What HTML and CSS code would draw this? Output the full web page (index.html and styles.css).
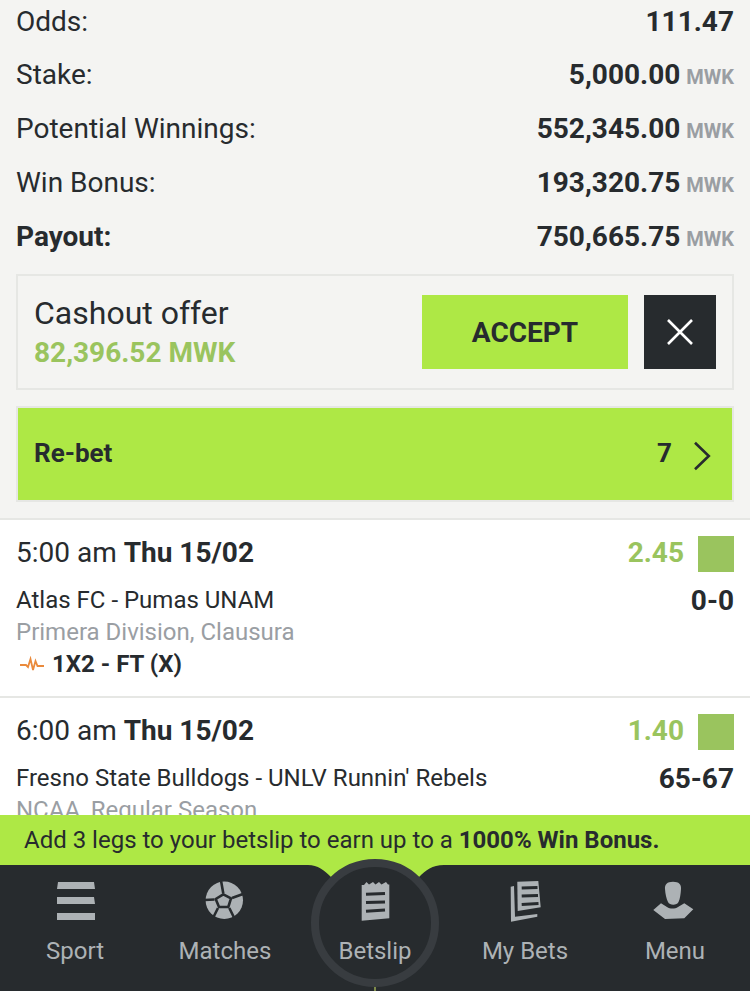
FILE: index.html
```html
<!DOCTYPE html>
<html lang="en">
<head>
  <meta charset="UTF-8" />
  <meta name="viewport" content="width=device-width, initial-scale=1.0" />
  <title>Betslip</title>
  <link rel="stylesheet" href="styles.css">
</head>
<body>
  <main class="content">
    <section class="summary">
      <div class="row"><span>Odds:</span><span class="value">111.47</span></div>
      <div class="row"><span>Stake:</span><span class="value">5,000.00<small>MWK</small></span></div>
      <div class="row"><span>Potential Winnings:</span><span class="value">552,345.00<small>MWK</small></span></div>
      <div class="row"><span>Win Bonus:</span><span class="value">193,320.75<small>MWK</small></span></div>
      <div class="row"><b>Payout:</b><span class="value">750,665.75<small>MWK</small></span></div>

      <div class="cashout">
        <div class="cashout-text">
          <div class="cashout-title">Cashout offer</div>
          <div class="cashout-amount">82,396.52 MWK</div>
        </div>
        <button class="accept">ACCEPT</button>
        <button class="decline" aria-label="Decline">
          <svg width="28" height="28" viewBox="0 0 28 28"><path d="M2 2 L26 26 M26 2 L2 26" stroke="#fff" stroke-width="2.6" fill="none"/></svg>
        </button>
      </div>

      <div class="rebet">
        <b>Re-bet</b>
        <span class="rebet-count">7</span>
        <svg width="18" height="28" viewBox="0 0 18 28"><path d="M3 0.700 L16.800 14 L3 27.300" stroke="#272b2e" stroke-width="2.600" fill="none"/></svg>
      </div>
    </section>

    <section class="bet">
      <div class="bet-top">
        <div class="bet-time">5:00 am <b>Thu 15/02</b></div>
        <div class="bet-odds">2.45</div>
        <div class="bet-square"></div>
      </div>
      <div class="bet-match"><span>Atlas FC - Pumas UNAM</span><b>0-0</b></div>
      <div class="bet-league">Primera Division, Clausura</div>
      <div class="bet-market">
        <svg width="26" height="16" viewBox="0 0 26 16"><path d="M1 9 H7 L9 11 L11.500 3 L14 14 L16.500 5 L18.500 10 H25" stroke="#ea8a3c" stroke-width="1.800" fill="none"/></svg>
        <span>1X2 - FT (X)</span>
      </div>
    </section>

    <section class="bet">
      <div class="bet-top">
        <div class="bet-time">6:00 am <b>Thu 15/02</b></div>
        <div class="bet-odds">1.40</div>
        <div class="bet-square"></div>
      </div>
      <div class="bet-match"><span>Fresno State Bulldogs - UNLV Runnin' Rebels</span><b>65-67</b></div>
      <div class="bet-league">NCAA, Regular Season</div>
    </section>
  </main>

  <div class="promo">Add 3 legs to your betslip to earn up to a <b>1000% Win Bonus.</b></div>

  <nav class="tabs">
    <svg class="notch" width="150" height="12" viewBox="0 0 150 12"><path d="M8 0 C18 0 24 5 31 12 H119 C126 5 132 0 144 0 Z" fill="#aee845"/></svg>
    <div class="ring"></div>
    <div class="ring-tick"></div>

    <div class="tab">
      <svg width="40" height="40" viewBox="0 0 40 40"><path d="M3 1 H39 L40 8 H2 Z M2 16 H39 L40 23 H2 Z M2 32 H40 V39 H2 Z" fill="#adb2b5"/></svg>
      <span>Sport</span>
    </div>
    <div class="tab">
      <svg width="40" height="40" viewBox="0 0 40 40">
        <circle cx="19.300" cy="19.300" r="18.700" fill="#adb2b5"/>
        <path d="M18.300 13.300 L26 17.300 L23.300 26 H14 L10.700 18 Z" fill="#adb2b5" stroke="#272b2e" stroke-width="2.600" stroke-linejoin="round"/>
        <path d="M18.300 12.500 L16 -0.500 M27 17 L38 13 M24.300 27 L30 38.500 M13 27 L7.500 38 M9.500 18.500 L-0.500 19" stroke="#272b2e" stroke-width="2.600" fill="none"/>
      </svg>
      <span>Matches</span>
    </div>
    <div class="tab">
      <svg width="40" height="40" viewBox="0 0 40 40">
        <path d="M6.700 4 L9 4 L11.500 1 L14 3.500 L18 1 L20.500 3.500 L24 1 L26.500 3.500 L31 1 L33 3.500 L34.300 3.500 V37.300 L6.700 39.700 Z" fill="#adb2b5"/>
        <path d="M11 13.300 L30 12.600 M11 21.600 L30 21 M11 30.300 L30 29" stroke="#272b2e" stroke-width="3" fill="none"/>
      </svg>
      <span>Betslip</span>
    </div>
    <div class="tab">
      <svg width="40" height="40" viewBox="0 0 40 40">
        <path d="M12.300 0.700 L33.300 0 L35.700 26.300 L12.700 30 Z" fill="#adb2b5"/>
        <path d="M16.700 7 L32.500 6.400 M16.700 15 L33 14.400 M16.700 23.500 L33.500 22.500" stroke="#272b2e" stroke-width="3" fill="none"/>
        <path d="M5.700 5.700 L9 5 L10 35.700 L32.300 33 V35.700 L6 40.700 Z" fill="#adb2b5"/>
      </svg>
      <span>My Bets</span>
    </div>
    <div class="tab">
      <svg width="40" height="40" viewBox="0 0 40 40">
        <path d="M18 0.700 C24 0.700 26.500 3.500 26 8 C25.700 13 25 18 23.500 21 C22 24.500 14.500 24.500 13 21 C11.500 18 10.300 13 10 8 C9.700 3.500 12 0.700 18 0.700 Z" fill="#adb2b5"/>
        <path d="M-1.700 29 L6 22.300 L12 26 C15 28 20 28 23 26 L29.300 22.300 L38.300 28.300 L29.300 37.300 L10 38 Z" fill="#adb2b5"/>
      </svg>
      <span>Menu</span>
    </div>
  </nav>
</body>
</html>
```

FILE: styles.css
```css
* {
  box-sizing: border-box;
}
html, body {
  margin: 0;
  padding: 0;
}
body {
  width: 750px;
  height: 991px;
  overflow: hidden;
  display: flex;
  flex-direction: column;
  font-family: Roboto, "Liberation Sans", sans-serif;
  color: #272b2e;
  background: #f4f4f2;
}
.content {
  flex: 1;
  min-height: 0;
  overflow: hidden;
}

/* totals */
.summary {
  margin-top: -6px;
  padding: 0 16px 16px;
}
.row {
  height: 54px;
  display: flex;
  align-items: center;
  justify-content: space-between;
  font-size: 28px;
}
.row + .row {
  padding-bottom: 2px;
}
.value {
  font-weight: 700;
}
.value small {
  margin-left: 6px;
  font-size: 20px;
  color: #9a9ea3;
}

/* cashout */
.cashout {
  height: 116px;
  margin-top: 10px;
  padding: 0 16px;
  display: flex;
  align-items: center;
  border: 2px solid #e6e7e4;
}
.cashout-text {
  flex: 1;
  padding-top: 2px;
}
.cashout-title {
  font-size: 32px;
  line-height: 39px;
}
.cashout-amount {
  font-size: 28px;
  line-height: 39px;
  font-weight: 700;
  color: #9ac45e;
}
.accept {
  width: 206px;
  height: 74px;
  border: none;
  background: #aee845;
  color: #272b2e;
  font: 700 28px Roboto, sans-serif;
}
.decline {
  width: 72px;
  height: 74px;
  margin-left: 16px;
  padding: 0;
  border: none;
  background: #272b2e;
  display: flex;
  align-items: center;
  justify-content: center;
}
.rebet {
  height: 96px;
  margin-top: 16px;
  padding: 0 22px 0 16px;
  display: flex;
  align-items: center;
  font-size: 26px;
  background: #aee845;
  border: 2px solid #e6e7e4;
}
.rebet b {
  flex: 1;
  padding-bottom: 2px;
}
.rebet-count {
  font-weight: 700;
  margin-right: 20px;
  padding-bottom: 2px;
}
.rebet svg {
  margin-top: 4px;
  overflow: visible;
}

/* bets */
.bet {
  padding: 16px 16px 16px;
  background: #fff;
  border-top: 2px solid #e6e7e4;
}
.bet-top {
  height: 36px;
  margin-bottom: 12px;
  display: flex;
  align-items: center;
  font-size: 28px;
}
.bet-time {
  flex: 1;
  padding-bottom: 4px;
}
.bet-odds {
  color: #9ac45e;
  font-weight: 700;
  margin-right: 14px;
  padding-bottom: 4px;
}
.bet-square {
  width: 36px;
  height: 36px;
  background: #9ac45e;
}
.bet-match {
  height: 32px;
  display: flex;
  align-items: center;
  justify-content: space-between;
  font-size: 24px;
}
.bet-match b {
  font-size: 28px;
}
.bet-league {
  height: 32px;
  line-height: 32px;
  font-size: 24px;
  color: #9a9ea3;
}
.bet-market {
  height: 32px;
  display: flex;
  align-items: center;
  gap: 7px;
  padding-left: 3px;
  font-size: 24px;
  font-weight: 700;
}

/* bottom */
.promo {
  height: 50px;
  line-height: 50px;
  padding-left: 24px;
  font-size: 24px;
  background: #aee845;
}
.tabs {
  position: relative;
  height: 126px;
  display: flex;
  background: #272b2e;
}
.notch {
  position: absolute;
  left: 300px;
  top: 0;
}
.ring {
  position: absolute;
  left: 311px;
  top: -6px;
  width: 128px;
  height: 128px;
  border: 8px solid #383c40;
  border-radius: 50%;
  background: #272b2e;
}
.ring-tick {
  position: absolute;
  left: 374px;
  top: 122px;
  width: 2px;
  height: 4px;
  background: #7d8a4a;
}
.tab {
  position: relative;
  width: 150px;
  padding-top: 16px;
  display: flex;
  flex-direction: column;
  align-items: center;
  font-size: 24px;
  color: #adb2b5;
}
.tab svg {
  overflow: visible;
}
.tab span {
  margin-top: 15px;
  line-height: 30px;
}
```
